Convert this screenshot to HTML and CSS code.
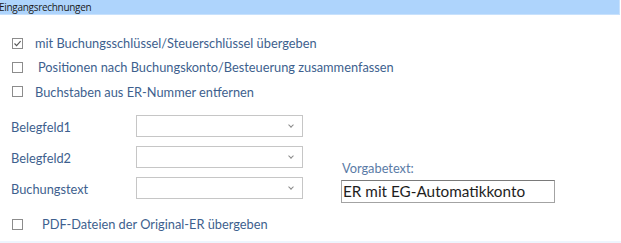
FILE: index.html
```html
<!DOCTYPE html>
<html lang="de">
<head>
    <meta charset="UTF-8">
    <title>Eingangsrechnungen</title>
    <link rel="stylesheet" href="styles.css">
</head>
<body>
    <div class="panel">
        <div class="panel-header">Eingangsrechnungen</div>

        <div class="options">
            <label class="check-row">
                <span class="checkbox checked">
                    <svg width="9" height="9" viewBox="0 0 9 9"><path d="M1.5 4.5 L3.6 6.6 L7.6 2.2" fill="none" stroke="#555" stroke-width="1.1"/></svg>
                </span>
                <span class="check-text">mit Buchungsschlüssel/Steuerschlüssel übergeben</span>
            </label>
            <label class="check-row">
                <span class="checkbox"></span>
                <span class="check-text indent">Positionen nach Buchungskonto/Besteuerung zusammenfassen</span>
            </label>
            <label class="check-row">
                <span class="checkbox"></span>
                <span class="check-text">Buchstaben aus ER-Nummer entfernen</span>
            </label>
        </div>

        <div class="fields">
            <div class="field-list">
                <div class="field-row">
                    <span class="field-label">Belegfeld1</span>
                    <div class="select"><span class="chevron"></span></div>
                </div>
                <div class="field-row">
                    <span class="field-label">Belegfeld2</span>
                    <div class="select"><span class="chevron"></span></div>
                </div>
                <div class="field-row">
                    <span class="field-label">Buchungstext</span>
                    <div class="select"><span class="chevron"></span></div>
                </div>
            </div>
            <div class="preset">
                <div class="preset-label">Vorgabetext:</div>
                <div class="preset-input">ER mit EG-Automatikkonto</div>
            </div>
        </div>

        <label class="check-row pdf-row">
            <span class="checkbox"></span>
            <span class="check-text wide">PDF-Dateien der Original-ER übergeben</span>
        </label>
    </div>
    <div class="bottom-strip"></div>
</body>
</html>
```

FILE: styles.css
```css
* {
    margin: 0;
    padding: 0;
    box-sizing: border-box;
}

body {
    font-family: "Lato", "Open Sans", sans-serif;
    background: #ffffff;
    width: 621px;
    height: 243px;
    overflow: hidden;
}

.panel {
    height: 241px;
}

.panel-header {
    width: 620px;
    height: 15px;
    background: #aed4fc;
    border-bottom: 1px solid #c8e1fc;
    border-right: 1px solid #c8e1fc;
    color: #1b1b1b;
    font-family: "Open Sans", sans-serif;
    font-size: 10px;
    line-height: 14px;
    text-indent: -1px;
    letter-spacing: -0.3px;
}

.options {
    padding-top: 16px;
    padding-left: 12px;
}

.check-row {
    display: flex;
    align-items: center;
    height: 24.3px;
}

.checkbox {
    width: 11px;
    height: 11px;
    border: 1px solid #8c8c8c;
    background: #fff;
    display: flex;
    align-items: center;
    justify-content: center;
    flex-shrink: 0;
}

.check-text {
    color: #3e5f8e;
    font-size: 12.8px;
    margin-left: 12px;
    white-space: nowrap;
}

.check-text.indent {
    margin-left: 15px;
}

.check-text.wide {
    margin-left: 19px;
}

.fields {
    display: flex;
    padding-left: 11px;
    margin-top: 11px;
}

.field-list {
    display: flex;
    flex-direction: column;
    gap: 9px;
}

.field-row {
    display: flex;
    align-items: center;
    height: 22px;
}

.field-label {
    width: 125px;
    color: #3e5f8e;
    font-size: 12.8px;
    padding-top: 3px;
}

.select {
    width: 167px;
    height: 22px;
    border: 1px solid #c6c6c6;
    background: #fff;
    position: relative;
}

.chevron {
    position: absolute;
    right: 9px;
    top: 7px;
    width: 4px;
    height: 4px;
    border-right: 1px solid #8a8a8a;
    border-bottom: 1px solid #8a8a8a;
    transform: rotate(45deg);
}

.preset {
    margin-left: 38px;
    padding-top: 45px;
}

.preset-label {
    color: #5a7ba6;
    font-size: 12.8px;
    line-height: 16px;
    padding-left: 1px;
}

.preset-input {
    margin-top: 4px;
    width: 214px;
    height: 23px;
    border: 1px solid #a3a3a3;
    border-top-color: #7a7a7a;
    color: #1e1e1e;
    font-size: 15.3px;
    line-height: 20px;
    padding-left: 1px;
}

.pdf-row {
    padding-left: 12px;
    margin-top: 9px;
}

.bottom-strip {
    height: 2px;
    background: #eef5fd;
}
```
